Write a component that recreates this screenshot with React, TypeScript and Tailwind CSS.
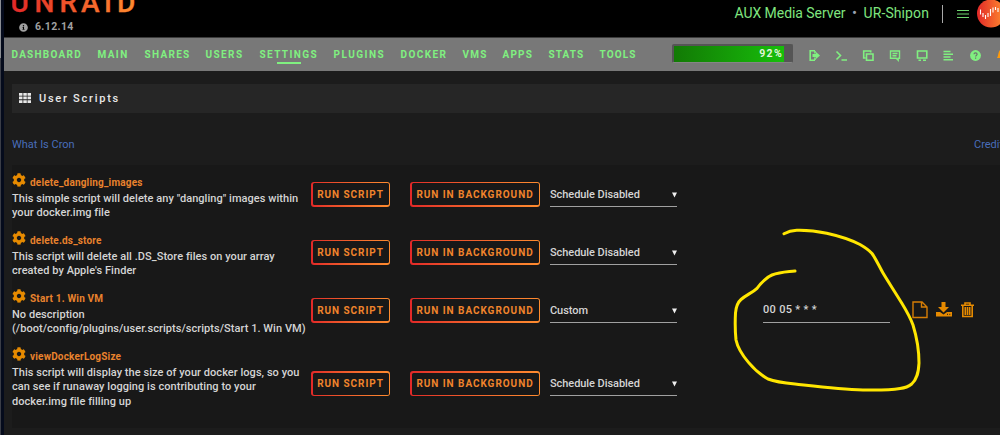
import type { FC, ReactNode } from "react";
import { FaCog, FaInfoCircle } from "react-icons/fa";

const NAV_ITEMS = [
  { label: "DASHBOARD", className: "w-[86px] tracking-[1.25px]" },
  { label: "MAIN", className: "w-[47px] tracking-[1.4px]" },
  { label: "SHARES", className: "w-[61px] tracking-[1.3px]" },
  { label: "USERS", className: "w-[54px] tracking-[1.4px]" },
  { label: "SETTINGS", className: "w-[74px] tracking-[1.4px]", active: true },
  { label: "PLUGINS", className: "w-[67px] tracking-[1.5px]" },
  { label: "DOCKER", className: "w-[62px] tracking-[1.4px]" },
  { label: "VMS", className: "w-10 tracking-[1.2px]" },
  { label: "APPS", className: "w-[46px] tracking-[1.2px]" },
  { label: "STATS", className: "w-[51px] tracking-[1.1px]" },
  { label: "TOOLS", className: "w-[60px] tracking-[1.1px]" },
];

const SCRIPTS = [
  {
    name: "delete_dangling_images",
    lines: [
      'This simple script will delete any "dangling" images within',
      "your docker.img file",
    ],
    schedule: "Schedule Disabled",
  },
  {
    name: "delete.ds_store",
    lines: [
      "This script will delete all .DS_Store files on your array",
      "created by Apple's Finder",
    ],
    schedule: "Schedule Disabled",
  },
  {
    name: "Start 1. Win VM",
    lines: [
      "No description",
      "(/boot/config/plugins/user.scripts/scripts/Start 1. Win VM)",
    ],
    schedule: "Custom",
    cron: "00 05 * * *",
  },
  {
    name: "viewDockerLogSize",
    lines: [
      "This script will display the size of your docker logs, so you",
      "can see if runaway logging is contributing to your",
      "docker.img file filling up",
    ],
    schedule: "Schedule Disabled",
  },
];

const Logo: FC = () => (
  <svg width="126" height="14" viewBox="0 0 126 14" className="block">
    <defs>
      <linearGradient id="brand" gradientUnits="userSpaceOnUse" x1="0" x2="124" y1="0" y2="0">
        <stop offset="0" stopColor="#e22828" />
        <stop offset="1" stopColor="#ff8c2f" />
      </linearGradient>
    </defs>
    <text
      x="-1.5 22.5 47.5 69 92 105"
      y="12"
      fill="url(#brand)"
      stroke="url(#brand)"
      strokeWidth="0.3"
      fontFamily="Roboto, sans-serif"
      fontSize="28"
      fontWeight="500"
    >
      UNRAID
    </text>
  </svg>
);

const Avatar: FC = () => (
  <svg width="24" height="28" viewBox="0 0 24 28" className="ml-[6px] shrink-0">
    <defs>
      <linearGradient id="avatar" x1="0" x2="1" y1="0" y2="0">
        <stop offset="0" stopColor="#e22828" />
        <stop offset="1" stopColor="#ff8c2f" />
      </linearGradient>
    </defs>
    <circle cx="15" cy="13.5" r="14" fill="url(#avatar)" />
    <path
      d="M4.500 9.500v5M7 13v4M9.500 15v4M12 13v4M14.500 9v7M17 7.500v5M19.500 7v3M22 8v4"
      stroke="#fff"
      strokeWidth="1.1"
    />
  </svg>
);

const Header: FC = () => (
  <header className="flex h-[37px] justify-between bg-black">
    <div className="w-[200px] pl-2">
      <Logo />
      <div className="mt-[5px] flex items-center gap-[7px] pl-[7px] text-[#a0a0a0]">
        <FaInfoCircle size={9} />
        <span className="text-[10.5px] leading-4 font-bold tracking-[0.35px]">6.12.14</span>
      </div>
    </div>
    <div className="flex h-[27px] items-center text-[#7fe57f]">
      <span className="text-[14px] tracking-[-0.05px]">AUX Media Server</span>
      <span className="w-[18px] text-center text-[15px] text-gray-400">•</span>
      <span className="text-[14px] tracking-[0.1px]">UR-Shipon</span>
      <span className="ml-[13px] h-[18px] w-px bg-[#a8a8a8]" />
      <svg width="13" height="10" viewBox="0 0 13 10" className="ml-[14px]">
        <path d="M0 1.500h12M0 5h12M0 8.500h12" stroke="#6fd66f" strokeWidth="1" />
      </svg>
      <Avatar />
    </div>
  </header>
);

const Toolbar: FC = () => (
  <div className="mb-[2px] flex items-center text-[#80f080]">
    <div className="h-[19px] w-[121px] rounded-[2px] border border-[#555] border-b-[#858585] bg-[#555] pt-px pl-px">
      <div className="flex h-4 w-[110px] items-center justify-end bg-gradient-to-r from-[#127a05] to-[#17bf0b] pr-[1px] pb-px text-[10.5px] font-bold tracking-[1.300px] text-[#e0f5dc]">
        92%
      </div>
    </div>
    <svg width="187" height="14" viewBox="0 0 187 14" fill="none" stroke="currentColor" strokeWidth="1.6" className="mt-1 ml-4">
      <path d="M6 1.700H1.200v9.600H6M4 6.500h4M6 2v2.500M6 8.500v2.500" />
      <path d="M7 3v7l4-3.500z" fill="currentColor" stroke="none" />
      <path d="M3.500 5v3H8V5z" fill="currentColor" stroke="none" />
      <path d="M27.500 2.500l4 4-4 4M32.500 11h5.500" />
      <path d="M56.500 9H54.700V2h7v1.500M57.500 5h6.500v6.300h-6.500z" />
      <path d="M81.500 2h9v7.300h-1.300v2l-2-2h-5.700zM83.500 4.500h5M83.500 6.700h4" strokeWidth="1.400" />
      <path d="M108.500 2h9.300v7h-9.300zM109.500 11.300h2.500M114 11.300h3" />
      <path d="M134.500 2.500h7M134.500 5.300h9.500M134.500 8h7M134.500 10.800h9.500" />
      <circle cx="166.500" cy="6.500" r="5.400" fill="currentColor" stroke="none" />
      <path d="M165 5.300c0-2 3.100-2 3.100 0 0 1.200-1.500 1-1.500 2.300M166.600 8.500v1.300" stroke="#6c756c" strokeWidth="1.200" />
    </svg>
    <svg width="4" height="12" viewBox="0 0 4 12" className="shrink-0">
      <path d="M1 10C2.500 8 2 4 4 2v8z" fill="#ff9a0a" />
    </svg>
  </div>
);

const NavBar: FC = () => (
  <nav className="flex h-[34px] items-center justify-between border-t border-[#3c3c3c] bg-[#787878]">
    <ul className="mb-px flex pl-[7.5px] text-[10px] font-bold text-[#80f080]">
      {NAV_ITEMS.map(({ label, className, active }) => (
        <li key={label} className={className}>
          <span className="relative">
            {label}
            {active && (
              <span className="absolute -bottom-[4px] left-[17px] h-[2px] w-6 bg-[#80f080]" />
            )}
          </span>
        </li>
      ))}
    </ul>
    <Toolbar />
  </nav>
);

const GradientButton: FC<{ children: ReactNode }> = ({ children }) => (
  <div className="flex h-[25px] rounded-[3px] bg-gradient-to-r from-[#e22828] to-[#ff8c2f] p-[1.5px]">
    <button className="grow rounded-[1.5px] bg-[#181818] text-[10px] font-bold tracking-[0.95px] whitespace-nowrap text-[#f0842c]">
      {children}
    </button>
  </div>
);

const CronActions: FC = () => (
  <svg width="62" height="18" viewBox="0 0 62 18" className="ml-[22px]" fill="#e68a00">
    <path d="M1 1h9l5 5v10.500H1zM9.500 1v5H15" fill="none" stroke="#d67d05" strokeWidth="1.400" />
    <path d="M29.500 1h4v5h3.500l-5.500 5.500L26 6h3.500zM24 11h4l3.500 2.500L35 11h5v4.500H24z" />
    <path d="M35 13.300h1M37.300 13.300h1" stroke="#181818" />
    <path
      d="M49 4.200h13M53 4V2h5v2M50.800 4.500v11h9.400v-11M53.300 6v8M55.500 6v8M57.700 6v8"
      fill="none"
      stroke="#e68a00"
      strokeWidth="1.600"
    />
  </svg>
);

const ScriptRow: FC<{ script: (typeof SCRIPTS)[number] }> = ({ script }) => (
  <div className={`flex items-center ${script.lines.length > 2 ? "h-[89px]" : "h-[58px]"}`}>
    <div className="w-[299px] shrink-0 self-start pt-[6px]">
      <div className="flex h-[20.5px] items-start">
        <FaCog size={14} className="mt-[2px] text-[#e68a00]" />
        <span className="mt-1 ml-1 text-[10px] leading-4 font-bold tracking-[0.18px] text-[#e8822d]">
          {script.name}
        </span>
      </div>
      {script.lines.map((line) => (
        <p
          key={line}
          className="text-[11px] leading-[14.5px] font-medium tracking-[0.05px] whitespace-nowrap text-[#d4d4d4]"
        >
          {line}
        </p>
      ))}
    </div>
    <div className="w-[99px] shrink-0">
      <div className="w-[79px]">
        <GradientButton>RUN SCRIPT</GradientButton>
      </div>
    </div>
    <div className="w-[130px] shrink-0">
      <GradientButton>RUN IN BACKGROUND</GradientButton>
    </div>
    <div className="ml-[10px] flex h-[25px] w-[127px] shrink-0 items-center justify-between border-b border-[#a0a0a0] pt-[3px] text-[11px] font-medium tracking-[-0.06px] text-[#d4d4d4]">
      {script.schedule}
      <svg width="5" height="6" viewBox="0 0 5 6" className="-mt-px">
        <path d="M0 .5h5L2.500 5.500z" fill="#f0f0f0" />
      </svg>
    </div>
    {script.cron && (
      <>
        <div className="ml-[86px] h-[25px] w-[127px] shrink-0 border-b border-[#a0a0a0] pt-1 text-[11px] font-medium tracking-[0.3px] text-[#d4d4d4]">
          {script.cron}
        </div>
        <CronActions />
      </>
    )}
  </div>
);

// freehand marker stroke over the cron field
const Marker: FC = () => (
  <svg
    width="200"
    height="170"
    viewBox="0 0 200 170"
    fill="none"
    className="pointer-events-none absolute top-[225px] left-[730px]"
  >
    <path
      d="M54 8.700C58 6.500 61 5.500 66.700 5.300C77 5 86 6 96.700 8.300C109 11 120 14.500 130 19.500C136 23 139 25 142 28.500C146 34 149 41 153 48C159 58 165 67 171.700 78C176 85 180 92 183 100C187 113 189 125 189 138C188.500 148 187 154 181.700 159C178 162 174 163 170 163.500C158 165.500 146 165 133 165C110 164.500 87 161.500 65 159C55 158 46 157 38 154C25 147 9 129 6 115C5 105 5 97 5.500 88C6 82 7 78 11 74.500C16 70 22 68 27 63.300C31 58 35 53 42 50C50 47 57 47 65 46"
      stroke="#ffe600"
      strokeWidth="3"
      strokeLinecap="round"
      strokeLinejoin="round"
    />
  </svg>
);

export default function App() {
  return (
    <div className="relative flex h-[435px] w-[1000px] overflow-hidden bg-[#1c1c1c] font-['Roboto',sans-serif]">
      <div className="w-1 shrink-0 bg-[#050b1c]">
        <div className="h-[58px] w-px bg-[#8a8d92]" />
        <div className="h-[377px] w-px bg-[#3a3d46]" />
      </div>
      <div className="w-[996px] shrink-0">
        <Header />
        <NavBar />
        <main className="pt-[13px] pl-2">
          <h1 className="flex h-[29px] items-center gap-2 bg-[#262626] pl-[7px] text-[11px] font-medium tracking-[1.750px] text-[#e8e8e8]">
            <svg width="12" height="10" viewBox="0 0 12 10" fill="currentColor" className="-mt-px">
              <path d="M0 0h3.500v2.700H0zM4.300 0h3.500v2.700H4.300zM8.500 0H12v2.700H8.500zM0 3.600h3.500v2.700H0zM4.300 3.600h3.500v2.700H4.300zM8.500 3.600H12v2.700H8.500zM0 7.200h3.500v2.700H0zM4.300 7.200h3.500v2.700H4.300zM8.500 7.200H12v2.700H8.500z" />
            </svg>
            <span className="pt-px">User Scripts</span>
          </h1>
          <div className="flex h-[52px] justify-between pt-6 text-[11px] leading-4 text-[#486dba]">
            <a>What Is Cron</a>
            <a className="w-[26px] whitespace-nowrap">Credits</a>
          </div>
          <section className="bg-[#181818]">
            {SCRIPTS.map((script) => (
              <ScriptRow key={script.name} script={script} />
            ))}
          </section>
        </main>
      </div>
      <Marker />
    </div>
  );
}
